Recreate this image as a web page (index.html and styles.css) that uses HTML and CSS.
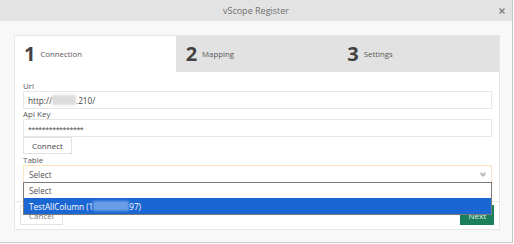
FILE: index.html
```html
<!DOCTYPE html>
<html lang="en">
    <head>
        <meta charset="UTF-8">
        <meta name="viewport" content="width=device-width, initial-scale=1.0">
        <title>vScope Register</title>
        <link rel="stylesheet" href="styles.css">
    </head>
    <body>
        <div class="dialog">
            <div class="titlebar">
                <span></span>
                <span class="title">vScope Register</span>
                <span class="close">
                    <svg width="6" height="6" viewBox="0 0 6 6"><path d="M0.5 0.5 L5.5 5.5 M5.5 0.5 L0.5 5.5" stroke="#7b7b7b" stroke-width="1.3"/></svg>
                </span>
            </div>

            <div class="dialog-body">
                <div class="wizard">
                    <div class="steps">
                        <div class="step active"><span class="num">1</span><span class="name">Connection</span></div>
                        <div class="step"><span class="num">2</span><span class="name">Mapping</span></div>
                        <div class="step"><span class="num">3</span><span class="name">Settings</span></div>
                    </div>

                    <div class="step-body">
                        <div class="label">Url</div>
                        <div class="field">http://<span class="blur"></span>.210/</div>
                        <div class="label">Api Key</div>
                        <div class="field password">****************</div>
                        <button class="btn">Connect</button>
                        <div class="label table-label">Table</div>
                        <div class="select-wrap">
                            <div class="field select">
                                <span>Select</span>
                                <svg width="6" height="5" viewBox="0 0 6 5"><path d="M0.5 0.5 L3 2.5 L5.5 0.5 M0.5 2.2 L3 4.2 L5.5 2.2" stroke="#8a8a8a" stroke-width="0.9" fill="none"/></svg>
                            </div>
                            <ul class="options">
                                <li class="option">Select</li>
                                <li class="option selected">TestAllColumn (1<span class="blur blur-blue"></span>97)</li>
                            </ul>
                        </div>
                    </div>

                    <div class="wizard-footer">
                        <button class="btn cancel">Cancel</button>
                        <button class="btn next">Next</button>
                    </div>
                </div>
            </div>
        </div>
    </body>
</html>
```

FILE: styles.css
```css
html, body {
    margin: 0;
    padding: 0;
    background: #fff;
}

body {
    font-family: "Open Sans", "Noto Sans", sans-serif;
    color: #444;
}

.dialog {
    width: 512px;
    height: 242px;
    border-right: 1px solid #c8c8c8;
    border-bottom: 1px solid #c8c8c8;
    background: #f8f8f8;
    display: flex;
    flex-direction: column;
}

.titlebar {
    height: 21px;
    flex: none;
    background: #e3e3e3;
    display: grid;
    grid-template-columns: 1fr auto 1fr;
    align-items: center;
}

.title {
    font-size: 9px;
    color: #6f6f6f;
}

.close {
    justify-self: end;
    margin-right: 7px;
    display: flex;
}

.dialog-body {
    padding: 14px 12px 12px 14px;
}

.wizard {
    background: #fff;
    border: 1px solid #e6e6e6;
}

.steps {
    display: flex;
    height: 36px;
}

.step {
    flex: 1;
    display: flex;
    align-items: center;
    gap: 5px;
    padding-left: 10px;
    background: #e2e2e2;
}

.step.active {
    background: #fff;
    padding-left: 9px;
}

.num {
    font-size: 20px;
    font-weight: 700;
    line-height: 1;
    color: #424242;
}

.name {
    font-size: 7.8px;
    color: #555;
}

.step-body {
    padding: 9px 7px 18px 8px;
    display: flex;
    flex-direction: column;
    align-items: flex-start;
}

.label {
    font-size: 8px;
    line-height: 10px;
    color: #555;
}

.table-label {
    margin-top: 1px;
}

.field {
    box-sizing: border-box;
    width: 100%;
    height: 18px;
    border: 1px solid #e6e6e6;
    padding: 0 4px;
    display: flex;
    align-items: center;
    font-size: 8.2px;
    color: #444;
}

.password {
    font-size: 7px;
    letter-spacing: -0.4px;
    padding-top: 3px;
}

.blur {
    display: inline-block;
    width: 24px;
    height: 10px;
    background: #dcdcdc;
    filter: blur(1px);
}

.btn {
    font-family: inherit;
    font-size: 8px;
    color: #444;
    background: #fff;
    border: 1px solid #e2e2e2;
    height: 17px;
    padding: 0 8px;
}

.select-wrap {
    position: relative;
    width: 100%;
}

.select {
    border-color: #fbe4bf;
    padding: 0 5px 0 5px;
    justify-content: space-between;
    color: #555;
}

.options {
    position: absolute;
    left: 0;
    right: 0;
    top: 17px;
    margin: 0;
    padding: 0;
    list-style: none;
    border: 1px solid #7a7a7a;
    background: #fff;
    z-index: 1;
}

.option {
    height: 15px;
    padding: 0 5px;
    display: flex;
    align-items: center;
    font-size: 8.2px;
    color: #555;
}

.option.selected {
    height: 16px;
    background: #1a66d2;
    color: #fff;
}

.blur-blue {
    width: 36px;
    background: #6a9de6;
}

.wizard-footer {
    border-top: 1px solid #e6e6e6;
    padding: 3px 5px 4px;
    display: flex;
    justify-content: space-between;
}

.cancel {
    height: 20px;
    color: #777;
}

.next {
    height: 20px;
    padding: 0 7px;
    background: #1b7f5c;
    border-color: #1b7f5c;
    color: #e8f2ee;
}
```
